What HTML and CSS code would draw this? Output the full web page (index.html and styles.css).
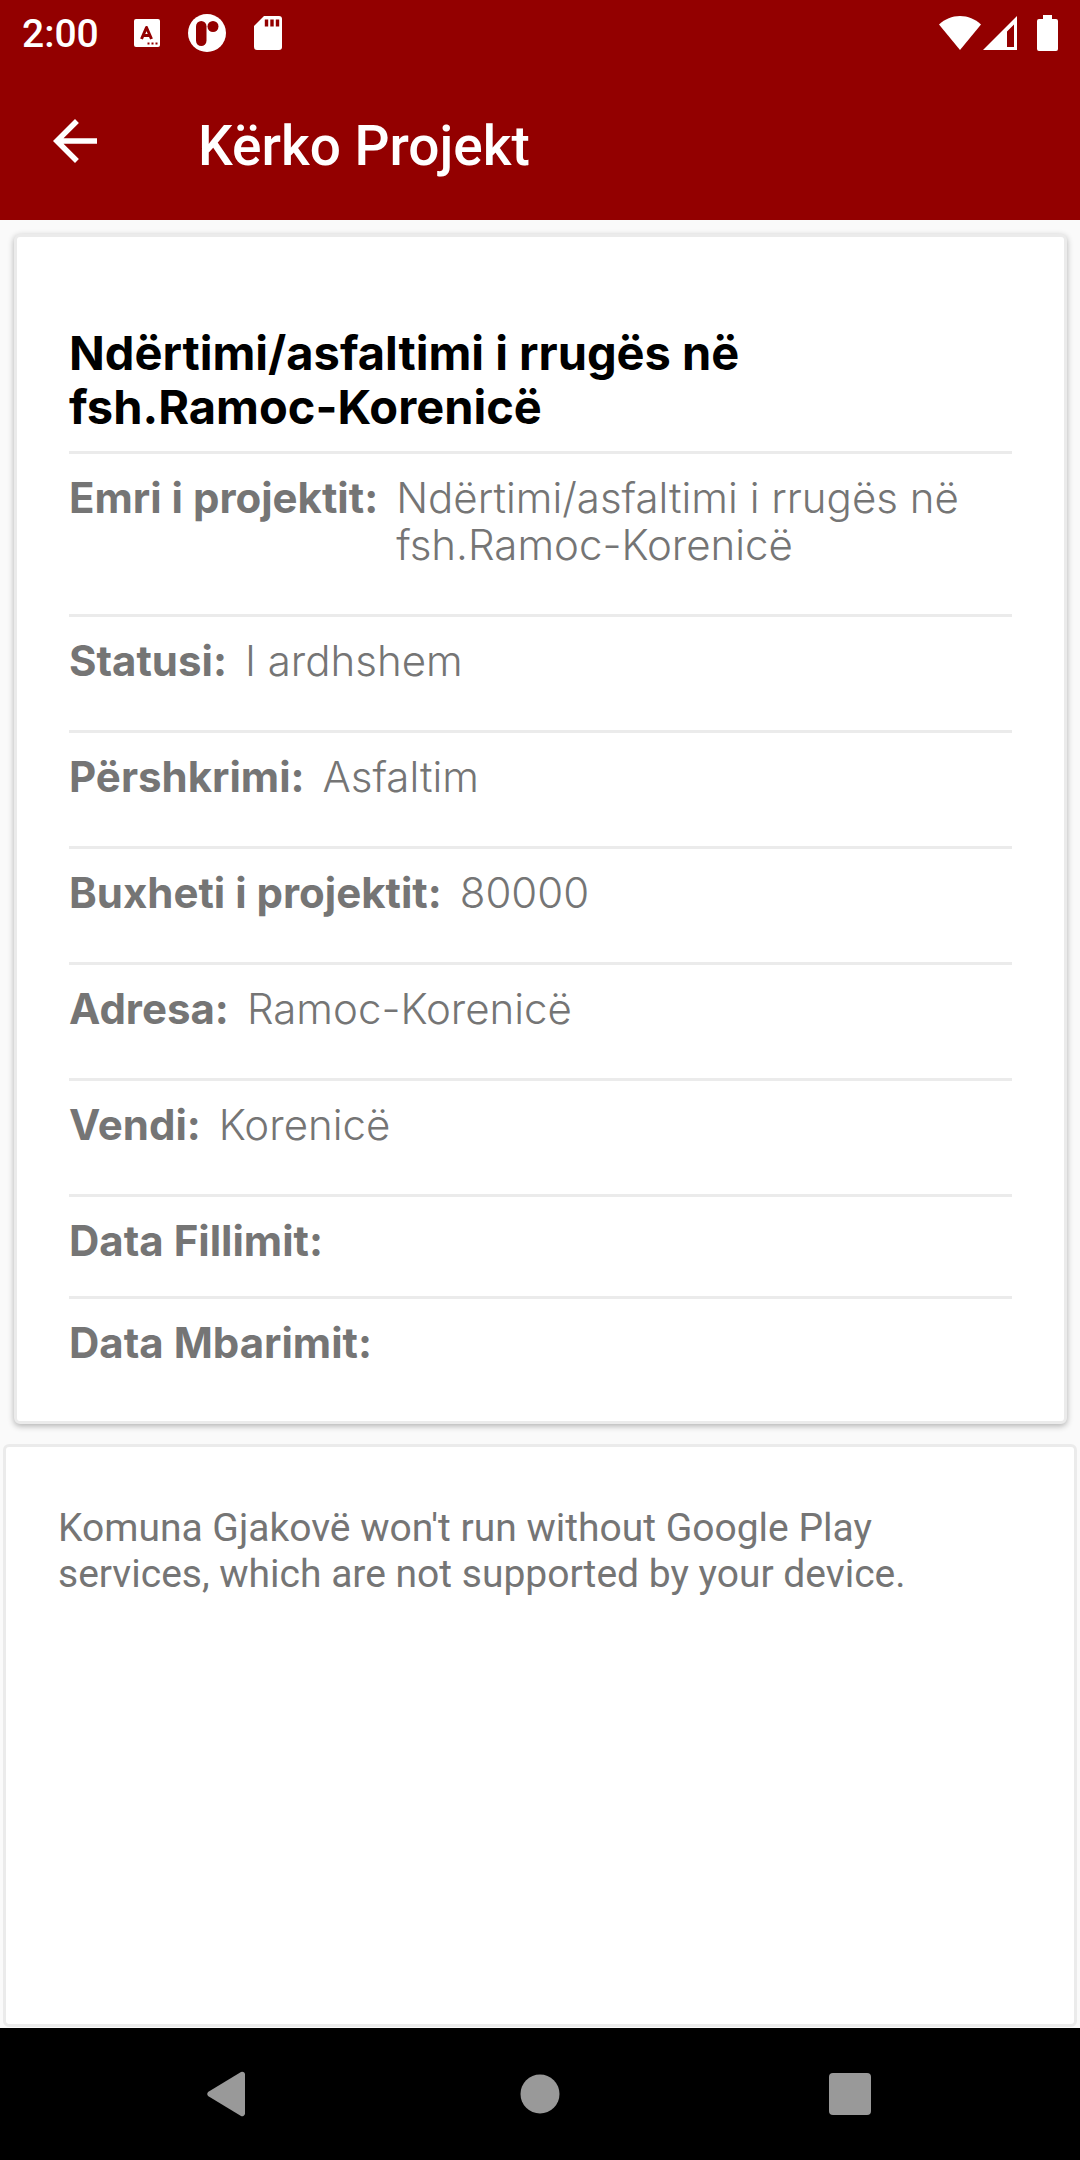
FILE: index.html
```html
<!DOCTYPE html>
<html lang="sq">

<head>
  <meta charset="UTF-8" />
  <meta name="viewport" content="width=device-width, initial-scale=1.0">
  <title>Kërko Projekt</title>
  <link rel="stylesheet" href="styles.css">
</head>

<body>
  <header class="header">
    <div class="statusbar">
      <span class="clock">2:00</span>
      <div class="notifications">
        <svg width="26" height="28" viewBox="0 0 26 28">
          <rect width="26" height="28" rx="2" fill="#fff" />
          <path d="M7.500 20L12.500 8.500L17.500 20M9.500 16.500h6" fill="none" stroke="#930000" stroke-width="3" stroke-linejoin="round" />
          <path d="M13.500 24.500h2M17.500 24.500h2M21.500 24.500h2" stroke="#930000" stroke-width="2" />
        </svg>
        <svg width="38" height="38" viewBox="0 0 38 38">
          <circle cx="19" cy="19" r="19" fill="#fff" />
          <rect x="8" y="7" width="10.500" height="25" rx="5.250" fill="#930000" />
          <circle cx="25" cy="12.500" r="5.500" fill="#930000" />
        </svg>
        <svg width="28" height="34" viewBox="0 0 28 34">
          <path d="M10 0H25a3 3 0 0 1 3 3V31a3 3 0 0 1-3 3H3a3 3 0 0 1-3-3V10z" fill="#fff" />
          <path d="M12.500 3.500v7M18 3.500v7M23.500 3.500v7" stroke="#930000" stroke-width="3.400" />
        </svg>
      </div>
      <div class="system-icons">
        <svg width="42" height="36" viewBox="0 0 42 36">
          <path d="M21 35L0 9.500C6 4 13 1 21 1s15 3 21 8.500z" fill="#fff" />
        </svg>
        <svg width="36" height="36" viewBox="0 0 36 36">
          <path d="M35 1V35H1zM32 9.500L25 16.500V32h7z" fill="#fff" fill-rule="evenodd" />
        </svg>
        <svg class="battery" width="21" height="36" viewBox="0 0 21 36">
          <path d="M6 0h9v4h4a2 2 0 0 1 2 2V34a2 2 0 0 1-2 2H2a2 2 0 0 1-2-2V6a2 2 0 0 1 2-2h4z" fill="#fff" />
        </svg>
      </div>
    </div>
    <div class="toolbar">
      <button type="button" class="icon-btn" aria-label="Kthehu">
        <svg width="66" height="66" viewBox="0 0 24 24">
          <path d="M20 11H7.830l5.590-5.590L12 4l-8 8 8 8 1.410-1.410L7.830 13H20v-2z" fill="#fff" />
        </svg>
      </button>
      <h1>Kërko Projekt</h1>
    </div>
  </header>

  <main class="content">
    <section class="card project">
      <h2>Ndërtimi/asfaltimi i rrugës në <span class="nowrap">fsh.Ramoc-Korenicë</span></h2>
      <dl class="details">
        <div class="row">
          <dt>Emri i projektit:</dt>
          <dd>Ndërtimi/asfaltimi i rrugës në <span class="nowrap">fsh.Ramoc-Korenicë</span></dd>
        </div>
        <div class="row">
          <dt>Statusi:</dt>
          <dd>I ardhshem</dd>
        </div>
        <div class="row">
          <dt>Përshkrimi:</dt>
          <dd>Asfaltim</dd>
        </div>
        <div class="row">
          <dt>Buxheti i projektit:</dt>
          <dd>80000</dd>
        </div>
        <div class="row">
          <dt>Adresa:</dt>
          <dd>Ramoc-Korenicë</dd>
        </div>
        <div class="row">
          <dt>Vendi:</dt>
          <dd>Korenicë</dd>
        </div>
        <div class="row">
          <dt>Data Fillimit:</dt>
        </div>
        <div class="row">
          <dt>Data Mbarimit:</dt>
        </div>
      </dl>
    </section>

    <section class="card map">
      <p>Komuna Gjakovë won't run without Google Play services, which are not supported by your device.</p>
    </section>
  </main>

  <nav class="navbar">
    <button type="button" class="icon-btn" aria-label="Back">
      <svg width="48" height="48" viewBox="0 0 48 48">
        <path d="M35 2a3 3 0 0 1 4 2V44a3 3 0 0 1-4 2L2 26a3 3 0 0 1 0-4z" fill="#999" />
      </svg>
    </button>
    <button type="button" class="icon-btn" aria-label="Home">
      <svg width="48" height="48" viewBox="0 0 48 48">
        <circle cx="24" cy="24" r="19.500" fill="#999" />
      </svg>
    </button>
    <button type="button" class="icon-btn" aria-label="Recents">
      <svg width="48" height="48" viewBox="0 0 48 48">
        <rect x="3" y="3" width="42" height="42" rx="4" fill="#999" />
      </svg>
    </button>
  </nav>
</body>

</html>
```

FILE: styles.css
```css
* {
  margin: 0;
  padding: 0;
  box-sizing: border-box;
}

body {
  min-height: 100vh;
  display: flex;
  flex-direction: column;
  background-color: #fafafa;
  color: #757575;
  font-family: Roboto, sans-serif;
  font-size: 39px;
}

svg {
  display: block;
}

.icon-btn {
  background: none;
  border: none;
  cursor: pointer;
}

.nowrap {
  white-space: nowrap;
}

/* Status bar and toolbar */
.header {
  background-color: #930000;
  color: #fff;
}

.statusbar {
  height: 66px;
  display: flex;
  align-items: center;
  padding: 0 22px;
}

.clock {
  font-weight: 500;
  padding-top: 2px;
}

.notifications {
  display: flex;
  align-items: center;
  gap: 28px;
  margin-left: 35px;
}

.system-icons {
  display: flex;
  align-items: center;
  gap: 1px;
  margin-left: auto;
}

.battery {
  margin-left: 18px;
}

.toolbar {
  height: 154px;
  display: flex;
  align-items: center;
  gap: 90px;
  padding: 0 42px 4px;
}

.toolbar h1 {
  font-size: 55px;
  font-weight: 500;
  padding-top: 10px;
}

/* Cards */
.content {
  flex: 1;
  display: flex;
  flex-direction: column;
  gap: 20px;
  padding-top: 14px;
}

.card {
  background-color: #fff;
  border: 3px solid #ebebeb;
  border-radius: 6px;
}

.project {
  margin: 0 13px 0 14px;
  padding: 89px 52px 41px;
  font-family: Inter, sans-serif;
  font-size: 42px;
  box-shadow: 0 2px 6px rgba(0, 0, 0, 0.3);
}

.project h2 {
  color: #000;
  font-size: 47px;
  font-weight: 700;
  line-height: 54px;
  padding-bottom: 17px;
}

.row {
  display: flex;
  gap: 18px;
  border-top: 3px solid #ebebeb;
  padding-top: 20px;
  line-height: 47px;
}

.row dt {
  flex-shrink: 0;
  font-weight: 700;
  padding-bottom: 32px;
}

.row dd {
  font-weight: 300;
  padding-bottom: 46px;
}

.row:last-child dt {
  padding-bottom: 14px;
}

.map {
  flex: 1;
  margin: 0 3px 1px;
  padding: 58px 52px;
  line-height: 46px;
}

/* Navigation bar */
.navbar {
  height: 132px;
  display: flex;
  align-items: center;
  justify-content: center;
  gap: 262px;
  background-color: #000;
}
```
